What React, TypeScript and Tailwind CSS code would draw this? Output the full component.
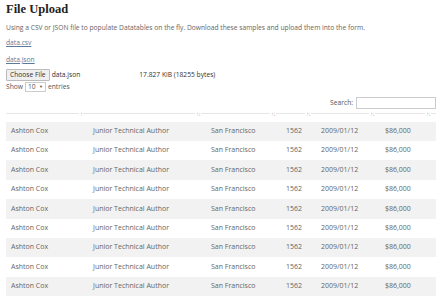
const rows = Array.from({ length: 9 });

const cols = [
  { w: 'w-[82px]' },
  { w: 'w-[118px]' },
  { w: 'w-[75px]' },
  { w: 'w-[35px]' },
  { w: 'w-[64px]' },
  { w: 'w-[56px]' },
];

function SortIcon({ first }: { first?: boolean }) {
  return (
    <span className="absolute right-[5px] bottom-[-4px] text-[6px] leading-none text-[#bbb] tracking-[-1px] bg-white px-[1px]">
      {first ? '↑' : '↑↓'}
    </span>
  );
}

export default function App() {
  return (
    <div className="w-[443px] h-[303px] bg-white overflow-hidden px-[6px] text-[#666] font-['Open_Sans',sans-serif] text-[6.7px]">
      <h1 className="font-['Liberation_Serif',serif] font-bold text-[12.5px] text-[#222] leading-none pt-[3px]">File Upload</h1>
      <p className="mt-[9px] leading-none">
        Using a CSV or JSON file to populate Datatables on the fly. Download these samples and upload them into the form.
      </p>
      <p className="mt-[9px] leading-none">
        <a className="underline text-[#5b7a9c]">data.csv</a>
      </p>
      <p className="mt-[10px] leading-none">
        <a className="underline text-[#5b7a9c]">data.json</a>
      </p>
      <div className="mt-[5px] flex items-center h-[13px]">
        <span className="border border-[#bbb] bg-[#efefef] px-[3px] h-[12px] flex items-center text-[#333] rounded-[1px]">Choose File</span>
        <span className="ml-[2px] text-[#333]">data.json</span>
        <span className="ml-[59px] text-[#333]">17.827 KiB (18255 bytes)</span>
      </div>
      <div className="flex items-center h-[10px] text-[#555]">
        Show
        <span className="mx-[2px] border border-[#ccc] h-[10px] w-[21px] flex items-center justify-between px-[2px]">
          <span>10</span>
          <span className="text-[4px]">▼</span>
        </span>
        entries
      </div>
      <div className="flex justify-end items-center mt-[4px] pr-[1px] h-[14px] text-[#555]">
        Search:
        <span className="ml-[3px] block w-[80px] h-[12px] border border-[#ccc]"></span>
      </div>
      <div className="w-[430px]">
        <div className="flex h-[4px] border-b border-[#e6e6e6]">
          {cols.map((c, i) => (
            <div key={i} className={`${c.w} relative`}>
              <SortIcon first={i === 0} />
            </div>
          ))}
        </div>
        <div className="mt-[8px] text-[7px]">
          {rows.map((_, i) => (
            <div key={i} className={`flex h-[19.4px] items-center ${i % 2 === 0 ? 'bg-[#f2f2f2]' : 'bg-white'}`}>
              <div className="w-[82px] pl-[5px]">Ashton Cox</div>
              <div className="w-[118px] pl-[5px]">Junior Technical Author</div>
              <div className="w-[75px] pl-[5px]">San Francisco</div>
              <div className="w-[35px] pl-[5px]">1562</div>
              <div className="w-[64px] pl-[5px]">2009/01/12</div>
              <div className="w-[56px] pl-[5px]">$86,000</div>
            </div>
          ))}
        </div>
      </div>
    </div>
  );
}
